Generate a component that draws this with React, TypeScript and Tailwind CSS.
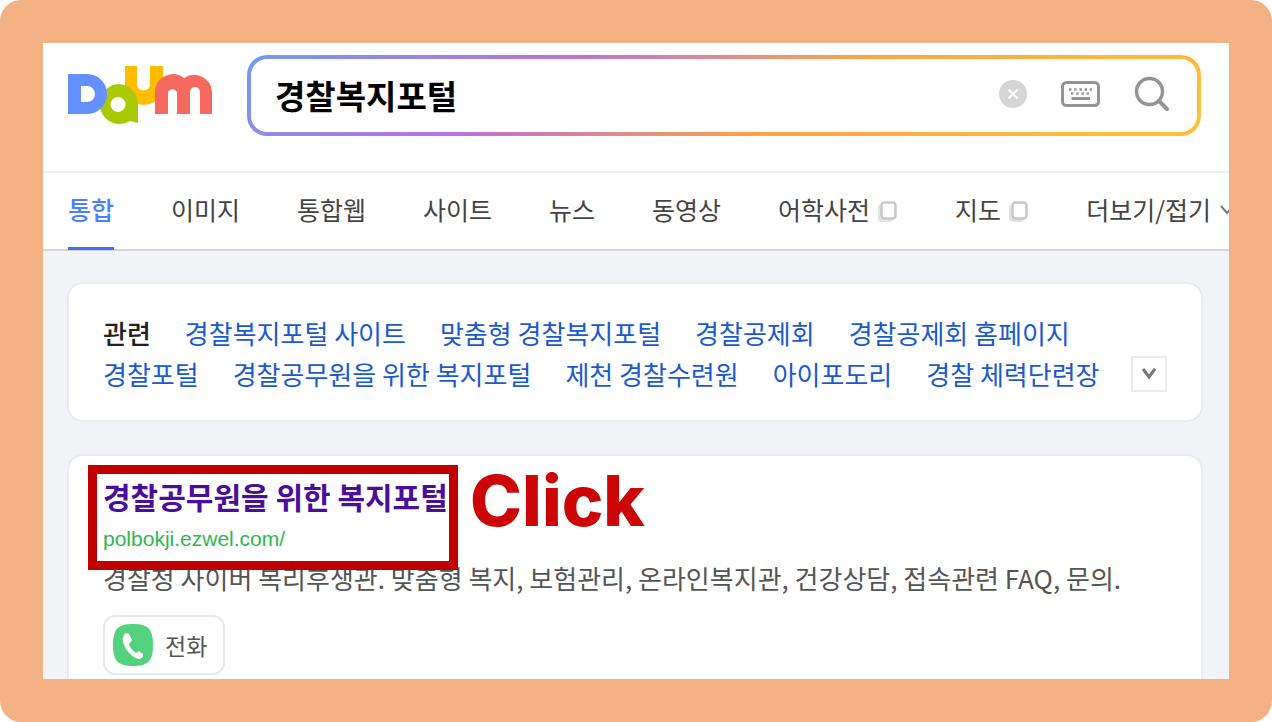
import { useState } from "react";

const tabs = [
  { label: "통합" },
  { label: "이미지" },
  { label: "통합웹" },
  { label: "사이트" },
  { label: "뉴스" },
  { label: "동영상" },
  { label: "어학사전", newWindow: true },
  { label: "지도", newWindow: true },
];

const relatedRows = [
  ["경찰복지포털 사이트", "맞춤형 경찰복지포털", "경찰공제회", "경찰공제회 홈페이지"],
  ["경찰포털", "경찰공무원을 위한 복지포털", "제천 경찰수련원", "아이포도리", "경찰 체력단련장"],
];

function DaumLogo() {
  return (
    <svg width="145" height="62" viewBox="0 0 145 62" aria-hidden="true">
      <path
        d="M57 1h12v20a7 7 0 0 0 13 0V1h13v20a19 19 0 0 1-38 0z"
        fill="#ffbc00"
      />
      <path
        d="M50 19a20 20 0 0 1 20 20v19l-8-2a20 20 0 1 1-12-37zM50 32a7.500 7.500 0 1 0 0 15 7.500 7.500 0 0 0 0-15z"
        fillRule="evenodd"
        fill="#a9c900"
      />
      <path
        d="M0 9h19a20 20 0 0 1 0 40H0zM13 21v16h6a8 8 0 0 0 0-16z"
        fillRule="evenodd"
        fill="#6490ff"
      />
      <path
        d="M87 49V27a18 18 0 0 1 29-14 18 18 0 0 1 28 14v22h-12V27a5 5 0 0 0-10 0v22h-13V27a5 5 0 0 0-9 0v22z"
        fill="#f5695f"
      />
    </svg>
  );
}

function NewWindowIcon() {
  return (
    <svg width="22" height="25" viewBox="0 0 22 25" fill="none" aria-hidden="true">
      <rect x="2" y="6" width="15" height="18" rx="4" fill="#e4e4e4" />
      <rect x="5.500" y="4.500" width="14" height="16" rx="3" fill="#fff" stroke="#c8c8c8" strokeWidth="2.500" />
    </svg>
  );
}

function SearchBox() {
  const [query, setQuery] = useState("경찰복지포털");

  return (
    <form
      role="search"
      onSubmit={(e) => e.preventDefault()}
      className="min-w-0 flex-1 rounded-[20px] bg-[linear-gradient(144deg,#6f9cf8,#c270d8_31%,#ffa640_59%,#ffc038)] p-1"
    >
      <div className="flex h-[73px] items-center rounded-2xl bg-white pr-[27px] pl-6">
        <input
          type="text"
          aria-label="검색어"
          value={query}
          onChange={(e) => setQuery(e.target.value)}
          className="min-w-0 flex-1 bg-transparent text-[33px] font-bold text-black outline-none"
        />
        <div className="flex items-center gap-[34px] pb-1">
          <button type="button" aria-label="지우기" onClick={() => setQuery("")}>
            <svg width="28" height="28" viewBox="0 0 28 28" aria-hidden="true">
              <circle cx="14" cy="14" r="14" fill="#d5d5d5" />
              <path d="M9.500 9.500l9 9M18.500 9.500l-9 9" stroke="#fff" strokeWidth="2" />
            </svg>
          </button>
          <button type="button" aria-label="키보드">
            <svg width="39" height="26" viewBox="0 0 39 26" fill="none" stroke="#929499" aria-hidden="true">
              <rect x="1.500" y="1.500" width="36" height="23" rx="4" strokeWidth="3" />
              <path d="M8 8.500h23" strokeWidth="2.500" strokeDasharray="2.400 2.800" />
              <path d="M10 12.500h19" strokeWidth="2.500" strokeDasharray="2.400 2.800" />
              <path d="M10.500 17.500h18.500" strokeWidth="3" />
            </svg>
          </button>
          <button type="submit" aria-label="검색">
            <svg width="36" height="36" viewBox="0 0 36 36" fill="none" stroke="#929499" aria-hidden="true">
              <circle cx="15.500" cy="15.500" r="13" strokeWidth="3.500" />
              <path d="M25 25l8 8" strokeWidth="4" strokeLinecap="round" />
            </svg>
          </button>
        </div>
      </div>
    </form>
  );
}

export default function App() {
  return (
    <div className="h-screen rounded-[21px] bg-[#f4b183] p-[43px] font-['Noto_Sans_CJK_KR',sans-serif]">
      <div className="h-full overflow-hidden bg-[#f2f3f7]">
        <header className="bg-white">
          <div className="flex h-32 items-start gap-[34px] pt-3 pr-7 pl-[25px]">
            <a href="#" aria-label="Daum" className="mt-[10px] shrink-0">
              <DaumLogo />
            </a>
            <SearchBox />
          </div>

          <nav className="flex h-20 gap-[57px] border-t-2 border-b-2 border-t-[#f0f0f0] border-b-[#d3d3d3] pl-[25px] text-[25px] whitespace-nowrap text-[#444]">
            {tabs.map((tab, i) => (
              <a
                key={tab.label}
                href="#"
                className={
                  i === 0
                    ? "-mb-px flex shrink-0 items-center border-b-3 border-[#3b73f5] font-medium text-[#4a80ff]"
                    : "flex shrink-0 items-center gap-[6px] pb-[2px]"
                }
              >
                {tab.label}
                {tab.newWindow && <NewWindowIcon />}
              </a>
            ))}
            <button type="button" className="flex shrink-0 items-center gap-2 pb-[2px]">
              더보기/접기
              <svg width="16" height="10" viewBox="0 0 16 10" fill="none" stroke="#777" strokeWidth="2" aria-hidden="true">
                <path d="M2 1l6 7 6-7" />
              </svg>
            </button>
          </nav>
        </header>

        <main className="flex flex-col gap-8 pt-[31px] pr-[26px] pl-6">
          {/* Related searches */}
          <section className="flex items-end justify-between rounded-2xl border-2 border-[#e9ebee] bg-white px-[34px] pt-7 pb-[26px]">
            <div className="text-[26px] leading-[41px] whitespace-nowrap text-[#1a5ad0]">
              {relatedRows.map((row, i) => (
                <div key={i} className="flex gap-[34px]">
                  {i === 0 && (
                    <h2 className="font-medium text-[#222]">관련</h2>
                  )}
                  {row.map((word) => (
                    <a key={word} href="#">
                      {word}
                    </a>
                  ))}
                </div>
              ))}
            </div>
            <button
              type="button"
              aria-label="펼치기"
              className="mb-[2px] flex size-9 items-center justify-center border-2 border-[#ededed]"
            >
              <svg width="14" height="12" viewBox="0 0 14 12" fill="none" stroke="#777" strokeWidth="3" aria-hidden="true">
                <path d="M1 1l6 8 6-8" />
              </svg>
            </button>
          </section>

          {/* Search result */}
          <section className="relative rounded-2xl border-2 border-[#e9ebee] bg-white px-[34px] pt-[17px] pb-10">
            <h3 className="text-[30px] leading-[46px] font-bold text-[#4b0d9a]">
              <a href="#">경찰공무원을 위한 복지포털</a>
            </h3>
            <a
              href="#"
              className="block font-['Liberation_Sans',sans-serif] text-[21px] leading-10 text-[#2db84d]"
            >
              polbokji.ezwel.com/
            </a>
            <p className="text-[26px] leading-[38px] whitespace-nowrap text-[#555]">
              경찰청 사이버 복리후생관. 맞춤형 복지, 보험관리, 온라인복지관, 건강상담, 접속관련 FAQ, 문의.
            </p>
            <button
              type="button"
              className="mt-[18px] flex h-[60px] items-center gap-3 rounded-xl border-2 border-[#e8e8e8] px-2 pr-4 text-[23px] text-[#555]"
            >
              <svg width="40" height="42" viewBox="0 0 40 42" aria-hidden="true">
                <path
                  d="M20 0c15 0 20 5 20 21s-5 21-20 21S0 37 0 21 5 0 20 0z"
                  fill="#53d17c"
                />
                <path
                  d="M13 9l3 1 3 6-3 4c1 4 4 7 7 9l3-2 4 3v3l-3 2c-7 0-16-10-17-18-1-4 1-7 3-8z"
                  fill="#fff"
                />
              </svg>
              전화
            </button>

            {/* Callout over the result title */}
            <div className="pointer-events-none absolute top-[9px] left-[19px] flex items-start gap-3">
              <div className="h-[105px] w-[370px] border-9 border-[#c00000]" />
              <span className="font-['Inter',sans-serif] text-[70px] leading-[72px] font-extrabold text-[#cc0606]">
                Click
              </span>
            </div>
          </section>
        </main>
      </div>
    </div>
  );
}
